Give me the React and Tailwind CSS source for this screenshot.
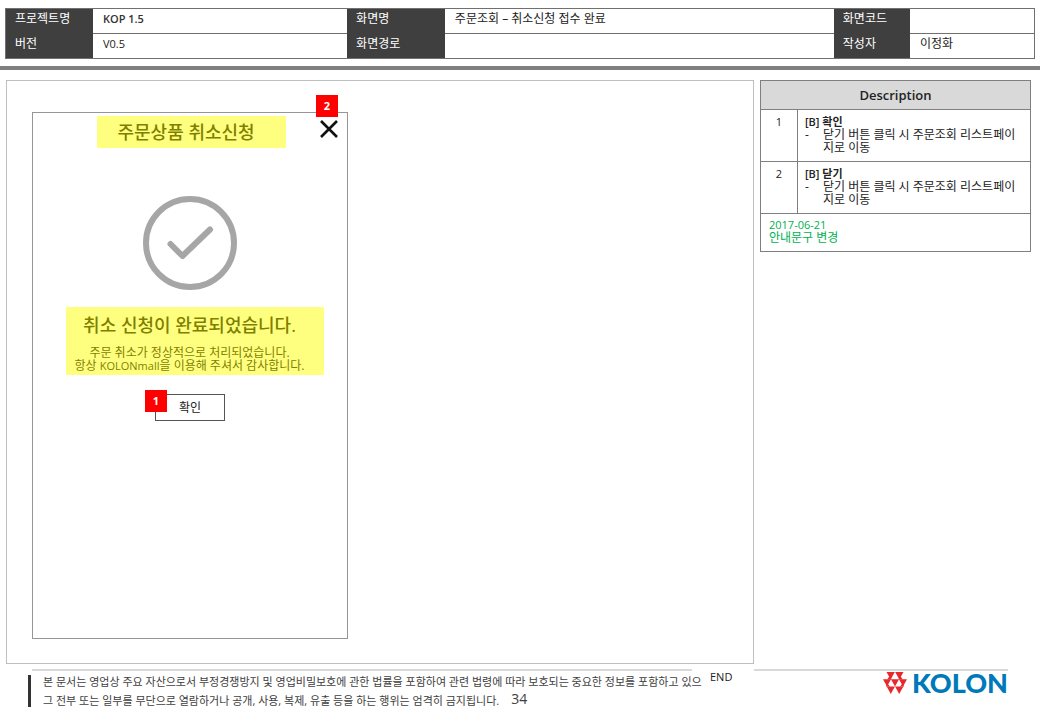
const fields = [
  [
    { id: 'project', label: '프로젝트명', value: 'KOP 1.5', tone: 'text-[11px] font-semibold text-[#333]' },
    { id: 'screen', label: '화면명', value: '주문조회 – 취소신청 접수 완료', tone: 'text-xs' },
    { id: 'code', label: '화면코드', value: '', tone: 'text-xs' },
  ],
  [
    { id: 'version', label: '버전', value: 'V0.5', tone: 'text-[11px]' },
    { id: 'path', label: '화면경로', value: '', tone: 'text-xs' },
    { id: 'author', label: '작성자', value: '이정화', tone: 'text-xs' },
  ],
];

const notes = [
  { no: 1, title: '[B] 확인' },
  { no: 2, title: '[B] 닫기' },
];

function Badge({ children, className }) {
  return (
    <span className={`absolute flex size-[22px] items-center justify-center bg-[#ff0000] font-['Open_Sans',sans-serif] text-[11px] font-bold text-white ${className}`}>
      {children}
    </span>
  );
}

function InfoTable() {
  return (
    <table className="w-full table-fixed border-collapse border border-[#707070] text-left leading-4">
      <colgroup>
        <col className="w-[8.5%]" />
        <col className="w-[24.7%]" />
        <col className="w-[9.5%]" />
        <col className="w-[37.8%]" />
        <col className="w-[7.4%]" />
        <col />
      </colgroup>
      <tbody>
        {fields.map((row, i) => (
          <tr key={i} className="h-[25px]">
            {row.map((f) => [
              <th key={f.id} scope="row" className="bg-[#3f3f3f] px-[9px] pb-1 text-xs leading-4 font-normal text-white">{f.label}</th>,
              <td key={f.id + '-value'} className={`border-y border-[#707070] px-[10px] pb-1 leading-4 ${f.tone}`}>{f.value}</td>,
            ])}
          </tr>
        ))}
      </tbody>
    </table>
  );
}

function DescriptionTable() {
  return (
    <table className="w-full table-fixed border-collapse border border-[#7f7f7f] text-[11px] leading-[13px] text-[#222]">
      <colgroup>
        <col className="w-[37px]" />
        <col />
      </colgroup>
      <thead>
        <tr className="h-[29px]">
          <th colSpan={2} className="border border-[#7f7f7f] bg-[#d9d9d9] text-[13px] font-semibold">Description</th>
        </tr>
      </thead>
      <tbody>
        {notes.map((n) => (
          <tr key={n.no} className="h-[52px] align-top">
            <td className="border border-[#7f7f7f] pt-[5px] text-center">{n.no}</td>
            <td className="border border-[#7f7f7f] px-[7px] pt-[5px]">
              <p className="font-semibold">{n.title}</p>
              <ul className="text-xs leading-[13px]">
                <li className="flex">
                  <span className="w-[18px] shrink-0">-</span>
                  <span className="break-all">닫기 버튼 클릭 시 주문조회 리스트페이지로 이동</span>
                </li>
              </ul>
            </td>
          </tr>
        ))}
        <tr className="h-[38px]">
          <td colSpan={2} className="border border-[#7f7f7f] px-2 pb-1 text-[#00b050]">
            <p>2017-06-21</p>
            <p className="text-xs leading-[13px]">안내문구 변경</p>
          </td>
        </tr>
      </tbody>
    </table>
  );
}

function Popup() {
  return (
    <section className="relative flex min-h-[527px] w-[316px] flex-col items-center border border-[#969696] pt-[3px]">
      <Badge className="right-[9px] -top-[18px]">2</Badge>
      <button type="button" aria-label="닫기" className="absolute right-2 top-[6px] size-5">
        <svg viewBox="0 0 20 20" className="size-5" fill="none" stroke="#111" strokeWidth="2.6">
          <path d="M2 2 18 18M18 2 2 18" />
        </svg>
      </button>
      <h1 className="ml-[2px] w-[189px] bg-[#ffff7f] pl-[21px] text-lg leading-8 font-medium text-[#7f7f00]">주문상품 취소신청</h1>
      <svg viewBox="0 0 94 94" className="mt-12 size-[94px]" fill="none" stroke="#a6a6a6">
        <circle cx="47" cy="47" r="44" strokeWidth="6" />
        <path d="M27.500 48 39.500 60 67 33.500" strokeWidth="6" strokeLinecap="round" strokeLinejoin="round" />
      </svg>
      <div className="ml-[9px] mt-[17px] flex h-[68px] w-[258px] flex-col bg-[#ffff7f] pr-[10px] text-center text-[#7f7f00]">
        <h2 className="mt-1 text-lg leading-7 font-medium">취소 신청이 완료되었습니다.</h2>
        <p className="mt-[7px] text-xs leading-[13px]">
          주문 취소가 정상적으로 처리되었습니다.<br />항상 <span className="text-[11px]">KOLONmall</span>을 이용해 주셔서 감사합니다.
        </p>
      </div>
      <div className="relative mt-[19px]">
        <button type="button" className="block h-[27px] w-[70px] border border-[#555] bg-white text-xs text-[#222]">확인</button>
        <Badge className="-left-[10px] -top-1">1</Badge>
      </div>
    </section>
  );
}

function Logo() {
  return (
    <div className="flex items-center gap-[5px]">
      <svg viewBox="0 0 24 22" className="h-[22px] w-6" fill="#e8282d" aria-hidden="true">
        <path d="M3.500 0h8.300L7.700 7.400zM12.200 0h8.300l-4.200 7.400zM0 7.200h8L4 14.400zM8 7.200h8l-4 7.200zM16 7.200h8l-4 7.200zM3.700 14.400h8.200L7.800 22zM12.100 14.400h8.200L16.200 22z" />
        <path d="M6.500 4 4.300 7.600h4.400zM17.500 4l-2.200 3.600h4.400zM4.500 11.500l-1.500 3h4zM19.500 11.500l1.500 3h-4z" />
      </svg>
      <span className="font-['Lato',sans-serif] text-[27px] leading-6 font-black text-[#0079b8]">KOLON</span>
    </div>
  );
}

export default function App() {
  return (
    <div className="min-h-screen bg-white font-['Open_Sans','Noto_Sans_CJK_KR',sans-serif] text-[#222]">
      <header className="border-b-4 border-[#7f7f7f] px-[5px] pb-[7px] pt-2">
        <InfoTable />
      </header>
      <main className="flex items-start gap-[6px] pl-[6px] pr-[9px] pt-[10px]">
        <div className="min-h-[584px] flex-1 border border-[#bfbfbf] pl-[25px] pt-[31px]">
          <Popup />
        </div>
        <aside className="w-[271px] shrink-0">
          <DescriptionTable />
        </aside>
      </main>
      <footer className="ml-7 mr-8 flex items-start pt-[5px]">
        <div className="min-w-0 flex-1">
          <div className="ml-1 border-t-2 border-[#d9d9d9]" />
          <div className="mt-px flex items-center gap-3 text-[11px] leading-[19px] text-[#404040]">
            <div className="h-8 w-[3px] shrink-0 bg-[#333]" />
            <div className="whitespace-nowrap">
              <p>본 문서는 영업상 주요 자산으로서 부정경쟁방지 및 영업비밀보호에 관한 법률을 포함하여 관련 법령에 따라 보호되는 중요한 정보를 포함하고 있으</p>
              <p className="flex gap-3">
                <span>그 전부 또는 일부를 무단으로 열람하거나 공개, 사용, 복제, 유출 등을 하는 행위는 엄격히 금지됩니다.</span>
                <span className="text-sm leading-4">34</span>
              </p>
            </div>
          </div>
        </div>
        <span className="w-[62px] shrink-0 pl-[18px] text-[11px] leading-4">END</span>
        <div className="flex w-[254px] shrink-0 flex-col items-end border-t-2 border-[#d9d9d9]">
          <Logo />
        </div>
      </footer>
    </div>
  );
}
